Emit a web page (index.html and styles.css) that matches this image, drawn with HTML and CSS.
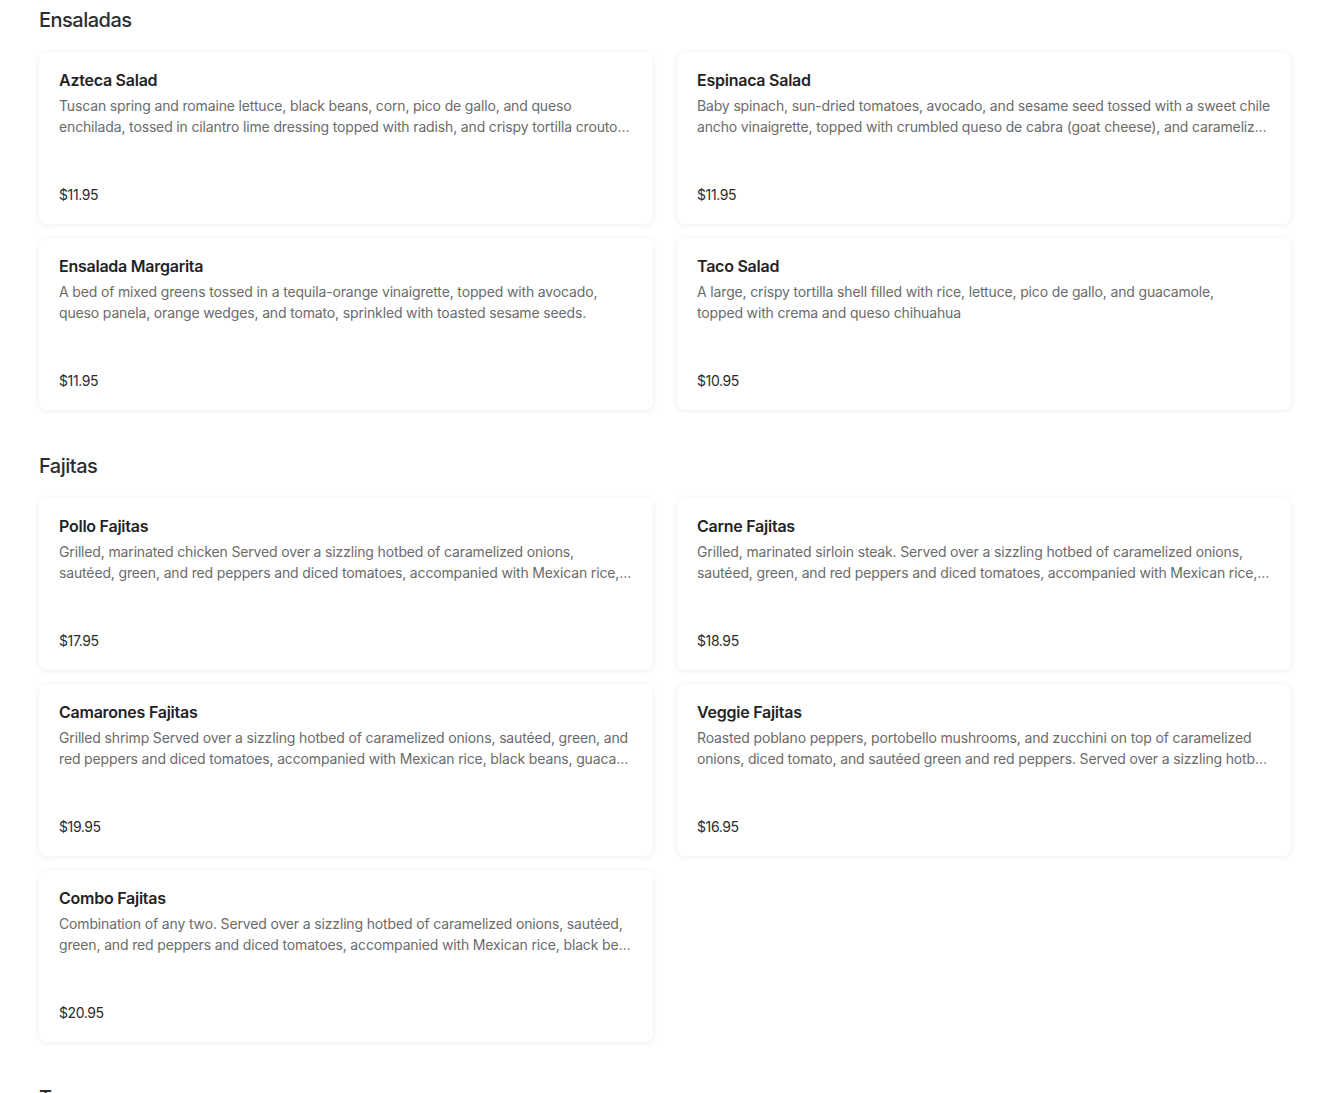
FILE: index.html
```html
<!DOCTYPE html>
<html lang="en">
<head>
  <meta charset="UTF-8">
  <title>Menu</title>
  <link rel="stylesheet" href="styles.css">
</head>
<body>
  <div class="menu">

    <section class="category">
      <h2>Ensaladas</h2>
      <div class="items">
        <div class="item">
          <h3>Azteca Salad</h3>
          <p class="desc"><span class="line">Tuscan spring and romaine lettuce, black beans, corn, pico de gallo, and queso</span> <span class="rest">enchilada, tossed in cilantro lime dressing topped with radish, and crispy tortilla croutons.</span></p>
          <span class="price">$11.95</span>
        </div>
        <div class="item">
          <h3>Espinaca Salad</h3>
          <p class="desc"><span class="line">Baby spinach, sun-dried tomatoes, avocado, and sesame seed tossed with a sweet chile</span> <span class="rest">ancho vinaigrette, topped with crumbled queso de cabra (goat cheese), and caramelized pecans.</span></p>
          <span class="price">$11.95</span>
        </div>
        <div class="item">
          <h3>Ensalada Margarita</h3>
          <p class="desc"><span class="line">A bed of mixed greens tossed in a tequila-orange vinaigrette, topped with avocado,</span> <span class="rest">queso panela, orange wedges, and tomato, sprinkled with toasted sesame seeds.</span></p>
          <span class="price">$11.95</span>
        </div>
        <div class="item">
          <h3>Taco Salad</h3>
          <p class="desc"><span class="line">A large, crispy tortilla shell filled with rice, lettuce, pico de gallo, and guacamole,</span> <span class="rest">topped with crema and queso chihuahua</span></p>
          <span class="price">$10.95</span>
        </div>
      </div>
    </section>

    <section class="category">
      <h2>Fajitas</h2>
      <div class="items">
        <div class="item">
          <h3>Pollo Fajitas</h3>
          <p class="desc"><span class="line">Grilled, marinated chicken Served over a sizzling hotbed of caramelized onions,</span> <span class="rest">sautéed, green, and red peppers and diced tomatoes, accompanied with Mexican rice, black beans, guacamole, sour cream and tortillas.</span></p>
          <span class="price">$17.95</span>
        </div>
        <div class="item">
          <h3>Carne Fajitas</h3>
          <p class="desc"><span class="line">Grilled, marinated sirloin steak. Served over a sizzling hotbed of caramelized onions,</span> <span class="rest">sautéed, green, and red peppers and diced tomatoes, accompanied with Mexican rice, black beans, guacamole, sour cream and tortillas.</span></p>
          <span class="price">$18.95</span>
        </div>
        <div class="item">
          <h3>Camarones Fajitas</h3>
          <p class="desc"><span class="line">Grilled shrimp Served over a sizzling hotbed of caramelized onions, sautéed, green, and</span> <span class="rest">red peppers and diced tomatoes, accompanied with Mexican rice, black beans, guacamole, sour cream and tortillas.</span></p>
          <span class="price">$19.95</span>
        </div>
        <div class="item">
          <h3>Veggie Fajitas</h3>
          <p class="desc"><span class="line">Roasted poblano peppers, portobello mushrooms, and zucchini on top of caramelized</span> <span class="rest">onions, diced tomato, and sautéed green and red peppers. Served over a sizzling hotbed with Mexican rice, black beans and tortillas.</span></p>
          <span class="price">$16.95</span>
        </div>
        <div class="item">
          <h3>Combo Fajitas</h3>
          <p class="desc"><span class="line">Combination of any two. Served over a sizzling hotbed of caramelized onions, sautéed,</span> <span class="rest">green, and red peppers and diced tomatoes, accompanied with Mexican rice, black beans, guacamole, sour cream and tortillas.</span></p>
          <span class="price">$20.95</span>
        </div>
      </div>
    </section>

    <section class="category">
      <h2>Tacos</h2>
    </section>

  </div>
</body>
</html>
```

FILE: styles.css
```css
body {
  font-family: Inter, "Liberation Sans", sans-serif;
  margin: 0;
  padding: 0;
  background: #fff;
  color: #2b2b2b;
}

.menu {
  padding: 8px 39px 0;
}

.category {
  margin-bottom: 44px;
}

.category h2 {
  margin: 0 0 20px;
  font-size: 20px;
  line-height: 24px;
  font-weight: 500;
  letter-spacing: -0.5px;
  color: #2d2d2f;
}

.items {
  display: grid;
  grid-template-columns: minmax(0, 1fr) minmax(0, 1fr);
  column-gap: 24px;
  row-gap: 14px;
}

.item {
  display: flex;
  flex-direction: column;
  min-width: 0;
  height: 172px;
  box-sizing: border-box;
  padding: 18px 20px 19px;
  background: #fff;
  border-radius: 8px;
  box-shadow: 0 1px 6px rgba(0, 0, 0, 0.08);
}

.item h3 {
  margin: 0 0 5px;
  font-size: 16px;
  line-height: 20px;
  font-weight: 600;
  letter-spacing: -0.25px;
  color: #232325;
}

.desc {
  margin: 0;
  font-size: 14px;
  line-height: 21px;
  letter-spacing: -0.15px;
  color: #6b6b6b;
}

.desc .line,
.desc .rest {
  display: block;
  white-space: nowrap;
  overflow: hidden;
  text-overflow: ellipsis;
}

.price {
  margin-top: auto;
  font-size: 14px;
  line-height: 20px;
  letter-spacing: -0.4px;
  color: #2b2b2b;
}
```
